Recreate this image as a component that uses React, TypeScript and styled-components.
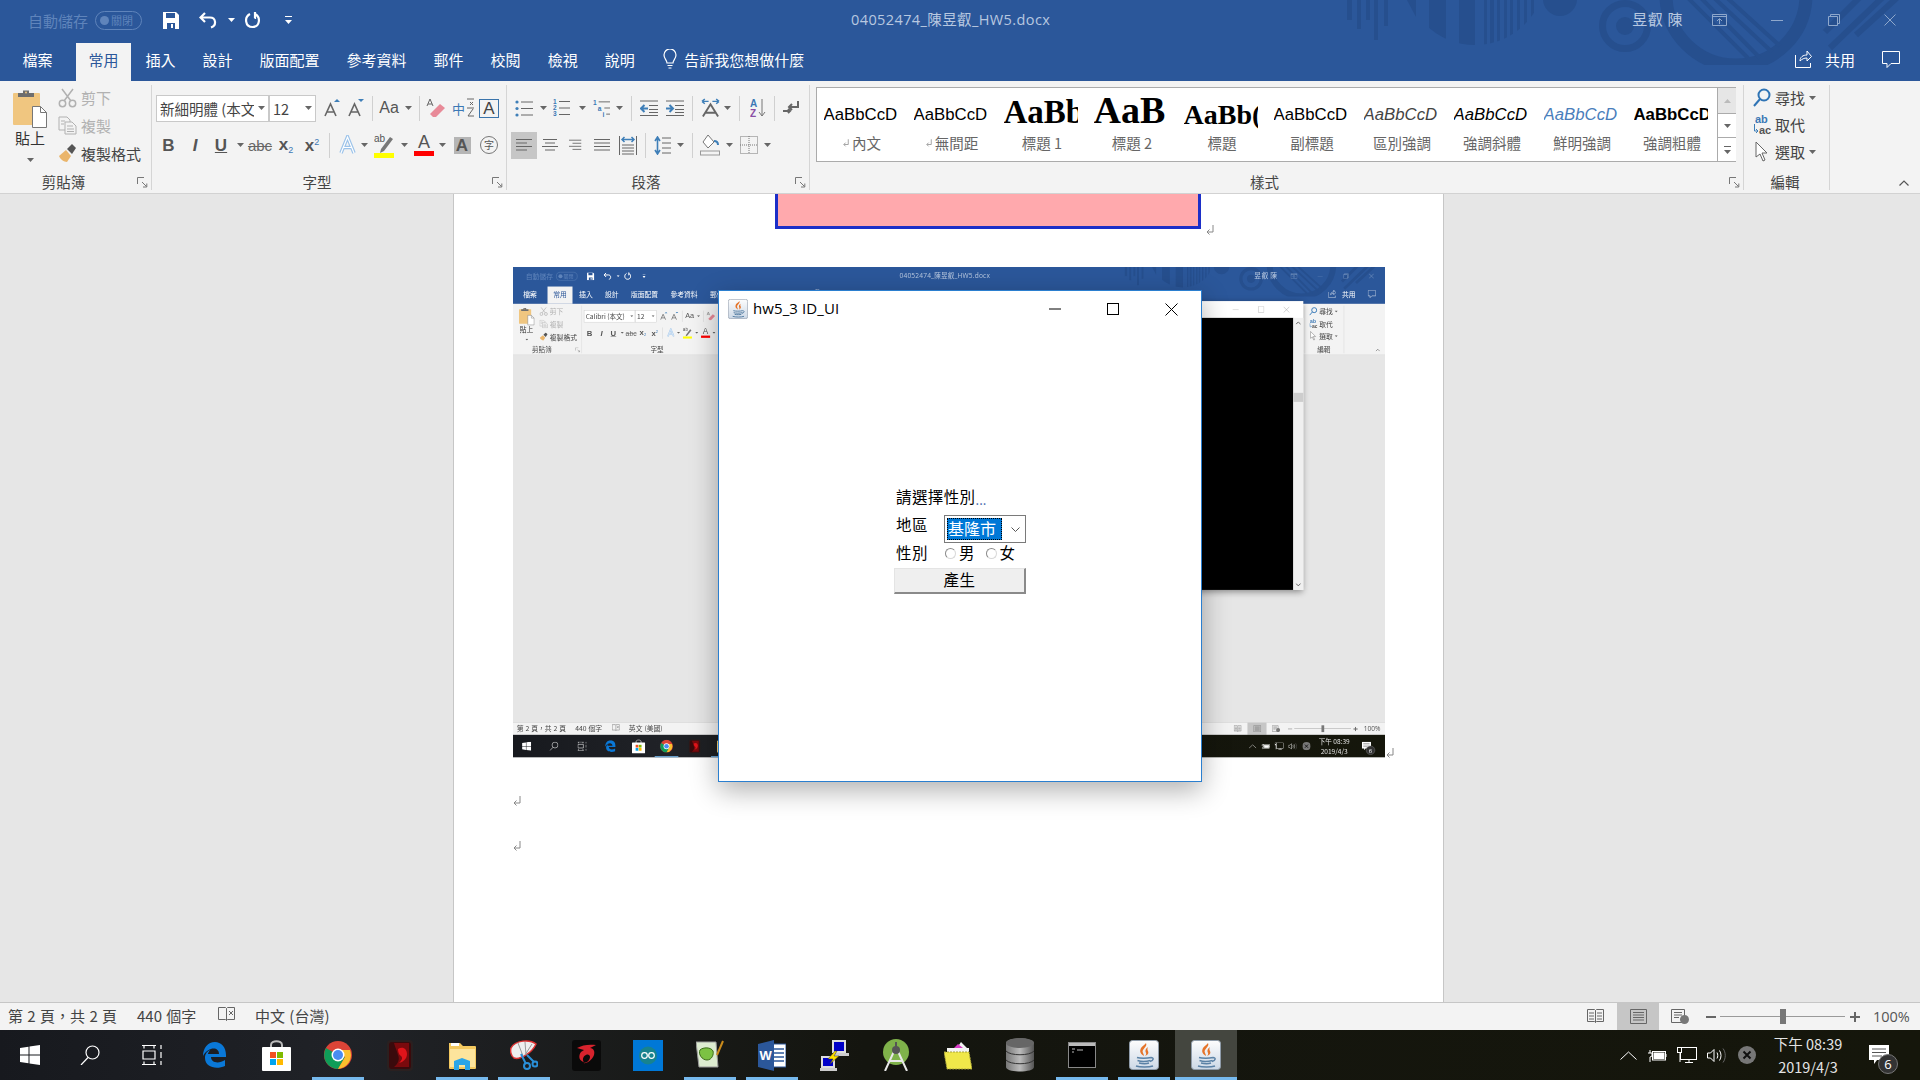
import React from "react";
import styled, { createGlobalStyle } from "styled-components";

const CJK = `"Noto Sans CJK TC", "Noto Sans", sans-serif`;

const Global = createGlobalStyle`
  html, body { margin: 0; padding: 0; width: 1920px; height: 1080px; overflow: hidden; background: #e6e6e6; }
  body { font-family: ${CJK}; }
`;

const Shell = styled.div`
  position: relative;
  width: 1920px;
  height: 1080px;
  display: flex;
  flex-direction: column;
  overflow: hidden;
  background: #e6e6e6;
`;

/* ---------- title bar + tabs ---------- */
const Header = styled.div`
  position: relative;
  height: 81px;
  flex: none;
  background: #2b579a;
`;
const Art = styled.svg`
  position: absolute;
  left: 0;
  top: 0;
`;
const TitleBar = styled.div`
  position: relative;
  height: 41px;
  display: flex;
  align-items: center;
  padding-bottom: 1px;
  box-sizing: border-box;
`;
const Qat = styled.div`
  width: 851px;
  flex: none;
  display: flex;
  align-items: center;
  padding-left: 28px;
  box-sizing: border-box;
`;
const AutoSave = styled.span`
  font-size: 15px;
  color: #5f84bb;
  width: 67px;
`;
const TogglePill = styled.span`
  width: 47px;
  height: 19px;
  box-sizing: border-box;
  border: 1px solid #5f84bb;
  border-radius: 10px;
  display: flex;
  align-items: center;
  gap: 2px;
  padding-left: 4px;
  font-size: 11px;
  line-height: 1;
  color: #5f84bb;
  margin-right: 21px;
  &::before {
    content: "";
    width: 9px;
    height: 9px;
    border-radius: 50%;
    background: #5f84bb;
  }
`;
const QatSlot = styled.span<{ $w: number }>`
  width: ${(p) => p.$w}px;
  flex: none;
  display: flex;
  align-items: center;
`;
const DocTitle = styled.div`
  font-size: 14.5px;
  color: #b8c8e0;
  white-space: nowrap;
  font-family: "Open Sans", ${CJK};
  letter-spacing: 0.4px;
  margin-bottom: 3px;
`;
const WinArea = styled.div`
  margin-left: auto;
  display: flex;
  align-items: center;
`;
const UserName = styled.span`
  font-size: 15px;
  letter-spacing: 0.6px;
  color: #b8c8e0;
  margin: 0 29px 3px 0;
`;
const WinBtn = styled.span<{ $w: number }>`
  width: ${(p) => p.$w}px;
  display: flex;
  align-items: center;
`;
const TabBar = styled.div`
  position: relative;
  height: 40px;
  display: flex;
  align-items: flex-end;
  padding-left: 10px;
  gap: 2px;
  color: #fff;
  font-size: 15px;
`;
const Tab = styled.div<{ $active?: boolean }>`
  height: 38px;
  padding: 0 12.5px 6px;
  display: flex;
  align-items: center;
  box-sizing: border-box;
  white-space: nowrap;
  background: ${(p) => (p.$active ? "#f3f3f3" : "transparent")};
  color: ${(p) => (p.$active ? "#2b579a" : "#fff")};
`;
const FileTab = styled(Tab)`
  margin-right: 9px;
`;
const TellMe = styled.div`
  height: 38px;
  display: flex;
  align-items: center;
  gap: 7px;
  padding: 0 0 6px 14px;
  box-sizing: border-box;
`;
const ShareArea = styled.div`
  margin-left: auto;
  height: 38px;
  display: flex;
  align-items: center;
  padding: 0 20px 6px 0;
  box-sizing: border-box;
`;
const ShareText = styled.span`
  margin: 0 27px 0 13px;
`;

/* ---------- ribbon ---------- */
const RibbonBar = styled.div`
  height: 113px;
  flex: none;
  display: flex;
  box-sizing: border-box;
  background: #f3f3f3;
  border-bottom: 1px solid #d2d2d2;
  color: #444;
  font-size: 15px;
`;
const Group = styled.div<{ $w: number }>`
  width: ${(p) => p.$w}px;
  flex: none;
  box-sizing: border-box;
  margin: 4px 0 3px;
  border-right: 1px solid #d5d5d5;
  display: flex;
  flex-direction: column;
`;
const GroupBody = styled.div`
  flex: 1;
  min-height: 0;
  display: flex;
`;
const GroupLabel = styled.div`
  height: 23px;
  box-sizing: border-box;
  padding: 7px 3px 0 0;
  display: flex;
  align-items: center;
  font-size: 14.5px;
  line-height: 1;
`;
const LabelText = styled.span<{ $full?: boolean }>`
  flex: 1;
  text-align: center;
  padding-right: ${(p) => (p.$full ? 0 : 10)}px;
`;
const Rows = styled.div`
  padding-top: 10px;
  display: flex;
  flex-direction: column;
  gap: 11px;
`;
const Row = styled.div`
  display: flex;
  align-items: center;
  height: 26px;
`;
const Tool = styled.span<{ $w: number; $ml?: number; $on?: boolean }>`
  width: ${(p) => p.$w}px;
  margin-left: ${(p) => p.$ml ?? 0}px;
  height: ${(p) => (p.$on ? 27 : 24)}px;
  flex: none;
  display: flex;
  align-items: center;
  justify-content: center;
  background: ${(p) => (p.$on ? "#c6c6c6" : "transparent")};
`;
const VSep = styled.span<{ $ml?: number }>`
  width: 1px;
  height: 25px;
  flex: none;
  margin-left: ${(p) => p.$ml ?? 3}px;
  background: #d0d0d0;
`;
const Combo = styled.div<{ $w: number; $ml: number }>`
  width: ${(p) => p.$w}px;
  margin-left: ${(p) => p.$ml}px;
  height: 27px;
  flex: none;
  box-sizing: border-box;
  background: #fff;
  border: 1px solid #c9c9c9;
  display: flex;
  align-items: center;
  padding-left: 3px;
  font-size: 14.5px;
  color: #444;
  overflow: hidden;
  white-space: nowrap;
`;
const ComboText = styled.span`
  flex: 1;
  overflow: hidden;
`;
const ComboArrow = styled.span`
  width: 14px;
  flex: none;
  display: flex;
  justify-content: center;
`;
const PasteCol = styled.div`
  width: 58px;
  flex: none;
  display: flex;
  flex-direction: column;
  align-items: center;
  padding: 4px 0 0 2px;
  box-sizing: border-box;
`;
const PasteLabel = styled.span`
  line-height: 18px;
  margin-top: -2px;
  font-size: 15px;
  color: #333;
`;
const PasteCaret = styled.span`
  margin-top: 11px;
  display: flex;
`;
const ClipCol = styled.div`
  display: flex;
  flex-direction: column;
  margin-top: -1px;
`;
const ClipItem = styled.div<{ $dim?: boolean }>`
  height: 28px;
  display: flex;
  align-items: center;
  gap: 4px;
  font-size: 15px;
  white-space: nowrap;
  color: ${(p) => (p.$dim ? "#b1b1b1" : "#444")};
  & > svg { width: 19px; flex: none; }
`;
const BoldLetter = styled.span<{ $italic?: boolean; $under?: boolean; $color?: string; $size?: number }>`
  font-family: "Liberation Sans", sans-serif;
  font-weight: 700;
  font-size: ${(p) => p.$size ?? 17}px;
  line-height: 1;
  color: ${(p) => p.$color ?? "#555"};
  font-style: ${(p) => (p.$italic ? "italic" : "normal")};
  text-decoration: ${(p) => (p.$under ? "underline" : "none")};
`;
const SubSup = styled.span<{ $sup?: boolean }>`
  font-size: 9px;
  color: #3b78b5;
  font-weight: 400;
  vertical-align: ${(p) => (p.$sup ? "6px" : "-3px")};
`;
const Strike = styled.span`
  font-family: "Liberation Sans", sans-serif;
  font-size: 15px;
  line-height: 1;
  color: #666;
  text-decoration: line-through;
`;
const RegularA = styled.span<{ $size?: number }>`
  font-family: "Liberation Sans", sans-serif;
  font-size: ${(p) => p.$size ?? 16}px;
  line-height: 1;
  color: #555;
`;
const ColorA = styled.span<{ $bar: string }>`
  font-family: "Liberation Sans", sans-serif;
  font-size: 18px;
  font-weight: 400;
  color: #555;
  line-height: 17px;
  width: 20px;
  text-align: center;
  border-bottom: 5px solid ${(p) => p.$bar};
`;
const GrayA = styled.span`
  width: 17px;
  height: 17px;
  background: #b5b5b5;
  font-family: "Liberation Sans", sans-serif;
  font-weight: 700;
  font-size: 17px;
  line-height: 17px;
  text-align: center;
  color: #555;
`;
const FramedA = styled.span`
  width: 20px;
  height: 19px;
  box-sizing: border-box;
  border: 1px solid #3a74ab;
  font-family: "Liberation Sans", sans-serif;
  font-size: 17px;
  line-height: 17px;
  text-align: center;
  color: #444;
`;
const CircleChar = styled.span`
  width: 18px;
  height: 18px;
  box-sizing: border-box;
  border: 1px solid #777;
  border-radius: 50%;
  font-size: 10px;
  line-height: 16px;
  text-align: center;
  color: #555;
`;

/* styles gallery */
const Gallery = styled.div`
  margin: 2px 0 0 6px;
  width: 920px;
  height: 75px;
  flex: none;
  display: flex;
  box-sizing: border-box;
  background: #fff;
  border: 1px solid #ababab;
`;
const StyleItem = styled.div`
  width: 90px;
  flex: none;
  display: flex;
  flex-direction: column;
  align-items: center;
`;
const Sample = styled.div<{ $font: string; $size: number; $weight?: number; $italic?: boolean; $color?: string }>`
  width: 74px;
  height: 46px;
  margin-left: -3px;
  display: flex;
  align-items: flex-end;
  justify-content: flex-start;
  overflow: hidden;
  white-space: nowrap;
  line-height: 1;
  padding-bottom: ${(p) => (p.$size < 20 ? 10 : 5)}px;
  box-sizing: border-box;
  font-family: ${(p) => p.$font};
  font-size: ${(p) => p.$size}px;
  font-weight: ${(p) => p.$weight ?? 400};
  font-style: ${(p) => (p.$italic ? "italic" : "normal")};
  color: ${(p) => p.$color ?? "#000"};
`;
const SampleLabel = styled.div`
  font-size: 14.5px;
  line-height: 20px;
  margin-top: -1px;
  color: #666;
  display: flex;
  align-items: center;
  gap: 3px;
`;
const GalleryScroll = styled.div`
  margin-left: auto;
  width: 18px;
  flex: none;
  display: flex;
  flex-direction: column;
  border-left: 1px solid #ababab;
`;
const ScrollBtn = styled.div<{ $off?: boolean; $h: number }>`
  height: ${(p) => p.$h}px;
  display: flex;
  align-items: center;
  justify-content: center;
  box-sizing: border-box;
  background: ${(p) => (p.$off ? "#e6e6e6" : "#fff")};
  border-bottom: 1px solid #ababab;
  &:last-child { border-bottom: 0; }
`;
const EditCol = styled.div`
  display: flex;
  flex-direction: column;
  margin-top: -1px;
  padding-left: 9px;
`;
const EditItem = styled.div`
  height: 27px;
  display: flex;
  align-items: center;
  font-size: 15px;
  white-space: nowrap;
  gap: 4px;
  & > svg:first-child { width: 18px; flex: none; }
`;
const CollapseCell = styled.div`
  flex: 1;
  display: flex;
  align-items: flex-end;
  justify-content: flex-end;
  padding: 0 11px 7px 0;
`;

/* ---------- document ---------- */
const DocArea = styled.div`
  position: relative;
  flex: 1;
  min-height: 0;
  background: #e6e6e6;
  overflow: hidden;
`;
const Page = styled.div`
  width: 991px;
  height: 100%;
  margin-left: 453px;
  box-sizing: border-box;
  background: #fff;
  border-left: 1px solid #c6c6c6;
  border-right: 1px solid #c6c6c6;
  padding-left: 59px;
`;
const PinkRow = styled.div`
  display: flex;
  align-items: flex-end;
  margin-left: 262px;
`;
const PinkBox = styled.div`
  width: 426px;
  height: 35px;
  box-sizing: border-box;
  background: #ffa9ad;
  border: 3px solid #1c2fc8;
  border-top: 0;
`;
const MiniRow = styled.div`
  margin-top: 38px;
  display: flex;
  align-items: flex-end;
`;
const MiniFrame = styled.div`
  width: 872px;
  height: 491px;
  flex: none;
  overflow: hidden;
  filter: blur(0.35px);
`;
const MiniScale = styled.div`
  width: 1920px;
  height: 1080px;
  transform: scale(0.4542);
  transform-origin: 0 0;
`;
const EmptyPara = styled.div`
  height: 45px;
  display: flex;
  align-items: center;
`;
const Paras = styled.div`
  margin-top: 20px;
`;
const ReturnMark = styled.svg<{ $ml?: number; $drop?: number }>`
  flex: none;
  margin: 0 0 ${(p) => -(p.$drop ?? 0)}px ${(p) => p.$ml ?? 3}px;
`;

/* console behind the dialog in the nested picture */
const ConsoleWin = styled.div`
  position: absolute;
  left: 900px;
  top: 75px;
  width: 840px;
  height: 636px;
  box-sizing: border-box;
  background: #fff;
  box-shadow: 0 4px 14px rgba(0, 0, 0, 0.4);
  display: flex;
  flex-direction: column;
`;
const ConsoleTitle = styled.div`
  height: 37px;
  flex: none;
  display: flex;
  align-items: center;
  justify-content: flex-end;
  gap: 42px;
  padding-right: 30px;
`;
const ConsoleBody = styled.div`
  flex: 1;
  display: flex;
  min-height: 0;
`;
const ConsoleScreen = styled.div`
  flex: 1;
  background: #000;
`;
const ConsoleScroll = styled.div`
  width: 22px;
  flex: none;
  background: #f0f0f0;
  display: flex;
  flex-direction: column;
  align-items: center;
  padding-top: 8px;
  box-sizing: border-box;
`;
const ConsoleThumb = styled.div`
  width: 100%;
  height: 20px;
  margin-top: 150px;
  background: #cdcdcd;
`;
const ConsoleDown = styled.div`
  margin-top: auto;
  padding-bottom: 8px;
  display: flex;
`;

/* ---------- java dialog ---------- */
const Dialog = styled.div`
  position: absolute;
  left: 718px;
  top: 96px;
  width: 484px;
  height: 492px;
  box-sizing: border-box;
  background: #fff;
  border: 1px solid #2b7fcf;
  box-shadow: 0 8px 26px rgba(0, 0, 0, 0.32);
  color: #000;
  display: flex;
  flex-direction: column;
`;
const DialogTitle = styled.div`
  height: 36px;
  flex: none;
  display: flex;
  align-items: center;
  padding-left: 9px;
`;
const DialogName = styled.span`
  font-family: "Open Sans", sans-serif;
  font-size: 15px;
  margin: 0 0 2px 5px;
  letter-spacing: 0.1px;
`;
const DialogControls = styled.div`
  margin-left: auto;
  display: flex;
  align-items: center;
  height: 100%;
`;
const CtrlBtn = styled.span`
  width: 58.5px;
  display: flex;
  justify-content: center;
`;
const DialogBody = styled.div`
  padding: 159px 0 0 177px;
  font-size: 15.5px;
  line-height: 1;
  font-weight: 400;
`;
const Prompt = styled.div`
  height: 22px;
  display: flex;
  align-items: center;
  margin-bottom: 7px;
  letter-spacing: 0.4px;
`;
const PromptDots = styled.span`
  color: #3a62a8;
  font-size: 13px;
  letter-spacing: 0;
  align-self: flex-end;
  margin-bottom: 2px;
`;
const FieldRow = styled.div<{ $h: number }>`
  height: ${(p) => p.$h}px;
  display: flex;
  align-items: flex-start;
`;
const FieldLabel = styled.span`
  width: 48px;
  height: 20px;
  flex: none;
  display: flex;
  align-items: center;
  letter-spacing: 0.4px;
`;
const SelectBox = styled.div`
  width: 82px;
  height: 28px;
  box-sizing: border-box;
  border: 1px solid #7a7a7a;
  background: #fff;
  display: flex;
  align-items: center;
  padding-left: 2px;
`;
const SelectValue = styled.span`
  width: 55px;
  height: 22px;
  box-sizing: border-box;
  background: #0078d7;
  outline: 1px dotted #000;
  outline-offset: -1px;
  color: #fff;
  font-size: 16px;
  display: flex;
  align-items: center;
  padding: 0 0 2px 1px;
`;
const SelectArrow = styled.span`
  margin-left: 9px;
  display: flex;
`;
const RadioRow = styled.div`
  display: flex;
  align-items: center;
  height: 20px;
  padding-left: 1px;
`;
const Radio = styled.span<{ $gap?: number }>`
  width: 11px;
  height: 11px;
  box-sizing: border-box;
  border-radius: 50%;
  border: 1px solid #d8d8d8;
  border-top-color: #8a8a8a;
  border-left-color: #8a8a8a;
  margin: 0 3px 0 ${(p) => p.$gap ?? 0}px;
`;
const CreateBtn = styled.div`
  width: 132px;
  height: 26px;
  margin-left: -2px;
  box-sizing: border-box;
  background: #efefef;
  border: 1px solid #e4e4e4;
  border-right: 2px solid #8a8a8a;
  border-bottom: 2px solid #8a8a8a;
  display: flex;
  align-items: center;
  justify-content: center;
  letter-spacing: 0.5px;
  padding-bottom: 1px;
`;

/* ---------- status bar ---------- */
const StatusBar = styled.div`
  height: 28px;
  flex: none;
  box-sizing: border-box;
  border-top: 1px solid #c6c6c6;
  background: #f3f3f3;
  display: flex;
  align-items: center;
  padding: 0 0 2px 8px;
  font-size: 15px;
  word-spacing: 1px;
  color: #444;
  white-space: nowrap;
`;
const StatusText = styled.span<{ $w: number }>`
  width: ${(p) => p.$w}px;
  flex: none;
`;
const StatusRight = styled.div`
  margin-left: auto;
  height: calc(100% + 2px);
  margin-bottom: -2px;
  display: flex;
  align-items: center;
`;
const ViewBtn = styled.span<{ $on?: boolean; $w: number }>`
  width: ${(p) => p.$w}px;
  height: 100%;
  display: flex;
  align-items: center;
  justify-content: center;
  background: ${(p) => (p.$on ? "#c6c6c6" : "transparent")};
`;
const ZoomOut = styled.span`
  width: 15px;
  display: flex;
  justify-content: flex-end;
`;
const ZoomTrack = styled.div`
  position: relative;
  width: 125px;
  height: 1px;
  margin: 0 4px;
  background: #9a9a9a;
  &::after {
    content: "";
    position: absolute;
    left: 60px;
    top: -7px;
    width: 6px;
    height: 15px;
    background: #777;
  }
`;
const ZoomPct = styled.span`
  width: 60px;
  padding-left: 13px;
  box-sizing: border-box;
  font-family: "Open Sans", sans-serif;
  font-size: 14.5px;
  color: #555;
`;

/* ---------- taskbar ---------- */
const Taskbar = styled.div`
  height: 50px;
  flex: none;
  display: flex;
  align-items: stretch;
  background: linear-gradient(90deg, #17191e 0%, #202227 18%, #14150f 45%, #15160b 100%);
`;
const TaskSlot = styled.div<{ $w: number; $run?: boolean; $active?: boolean }>`
  position: relative;
  width: ${(p) => p.$w}px;
  flex: none;
  display: flex;
  align-items: center;
  justify-content: center;
  background: ${(p) => (p.$active ? "#44463f" : "transparent")};
  &::after {
    content: "";
    display: ${(p) => (p.$run ? "block" : "none")};
    position: absolute;
    left: ${(p) => (p.$active ? 0 : 5)}px;
    right: ${(p) => (p.$active ? 0 : 5)}px;
    bottom: 0;
    height: 3px;
    background: #76b9ed;
  }
`;
const Tray = styled.div`
  margin-left: auto;
  display: flex;
  align-items: center;
  color: #fff;
`;
const TrayIcon = styled.span<{ $w: number }>`
  width: ${(p) => p.$w}px;
  flex: none;
  display: flex;
  justify-content: center;
`;
const Clock = styled.div`
  width: 94px;
  flex: none;
  font-size: 14.5px;
  line-height: 23px;
  text-align: center;
  color: #e4e4e4;
  padding-bottom: 1px;
`;
const NotifyBox = styled.div`
  position: relative;
  width: 65px;
  height: 50px;
  flex: none;
  display: flex;
  align-items: flex-start;
  padding: 15px 0 0 14px;
  box-sizing: border-box;
`;
const NotifyBadge = styled.span`
  position: absolute;
  left: 23px;
  top: 24px;
  width: 20px;
  height: 20px;
  border-radius: 50%;
  background: #333;
  border: 1px solid #777;
  box-sizing: border-box;
  color: #fff;
  font-family: "Open Sans", sans-serif;
  font-size: 13px;
  line-height: 18px;
  text-align: center;
`;

/* ---------- icons ---------- */
const Caret = ({ c = "#666" }: { c?: string }) => (
  <svg width="7" height="4" viewBox="0 0 7 4"><path d="M0 0h7L3.5 4z" fill={c} /></svg>
);
const CaretCell = ({ ml = 0, w = 8 }: { ml?: number; w?: number }) => (
  <Tool $w={w} $ml={ml}><Caret /></Tool>
);
const Launcher = () => (
  <svg width="11" height="11" viewBox="0 0 11 11" fill="none" stroke="#777">
    <path d="M.5 7V.5H7M5 5l4.5 4.5M6 10h3.8V6.500" />
  </svg>
);
const ReturnIcon = ({ w = 8, h = 10, ml, drop }: { w?: number; h?: number; ml?: number; drop?: number }) => (
  <ReturnMark width={w} height={h} viewBox="0 0 8 10" fill="none" stroke="#888" $ml={ml} $drop={drop}>
    <path d="M7 0v7H1.500M3.500 4.500 1 7l2.500 2.500" />
  </ReturnMark>
);
const Lines = ({ kind }: { kind: "left" | "center" | "right" | "just" }) => {
  const rows: [number, number][] =
    kind === "left" ? [[0, 16], [0, 11], [0, 16], [0, 11]]
    : kind === "center" ? [[1, 15], [3, 13], [0, 16], [3, 13]]
    : kind === "right" ? [[0, 14], [4, 14], [0, 14], [4, 14]]
    : [[0, 16], [0, 16], [0, 16], [0, 16]];
  return (
    <svg width="16" height="14" viewBox="0 0 16 14" stroke="#666">
      {rows.map(([a, b], i) => <path key={i} d={`M${a} ${1.5 + i * 3.500}H${b}`} />)}
    </svg>
  );
};
const Clipboard = () => (
  <svg width="35" height="42" viewBox="0 0 35 42">
    <rect x="0" y="4" width="27" height="32" rx="1" fill="#f0c680" />
    <path d="M5 8V4h5V1.500h6V4h5v4z" fill="#6e6e6e" />
    <circle cx="13" cy="3.500" r="1" fill="#f0c680" />
    <path d="M19.500 17.500h8l6 6v15h-14z" fill="#fff" stroke="#777" />
    <path d="M27.500 17.500v6h6" fill="none" stroke="#777" />
  </svg>
);
const Scissors = () => (
  <svg width="19" height="20" viewBox="0 0 19 20" fill="none" stroke="#b1b1b1" strokeWidth="1.500">
    <circle cx="4.500" cy="15.500" r="3.200" /><circle cx="14.500" cy="15.500" r="3.200" />
    <path d="M6 13 15 1M13 13 4 1" />
  </svg>
);
const CopyIcon = () => (
  <svg width="19" height="19" viewBox="0 0 19 19" fill="#f3f3f3" stroke="#b1b1b1">
    <path d="M1 1h8l3 3v10H1z" /><path d="M7 6h7l4 4v8H7z" /><path d="M9 10h6M9 13h7M9 15.500h7M3 5h4M3 8h3" />
  </svg>
);
const Brush = () => (
  <svg width="19" height="19" viewBox="0 0 19 19">
    <path d="M1 12 8 6l5 6-4 6c-3 0-7-3-8-6z" fill="#eab56b" />
    <path d="m9 5 5-5 4 4-4 6z" fill="#555" />
  </svg>
);
const GrowA = ({ up }: { up?: boolean }) => (
  <svg width="17" height="20" viewBox="0 0 17 20">
    <path d="M1 18 6.500 6 12 18M3 14h7" fill="none" stroke="#666" strokeWidth="1.600" />
    <path d={up ? "M10 4l3-3 3 3z" : "M10 1h6l-3 3z"} fill="#3f7fb8" />
  </svg>
);
const Eraser = () => (
  <svg width="20" height="20" viewBox="0 0 20 20">
    <path d="M1 8 4 1l3 7M2 6h4" fill="none" stroke="#666" />
    <path d="M4 16 14 6l5 4-9 9H7z" fill="#e88a98" />
  </svg>
);
const Phonetic = () => (
  <svg width="24" height="22" viewBox="0 0 24 22">
    <text x="0" y="17" fontSize="13" fontFamily={CJK} fill="#3b78b5">中</text>
    <path d="M15 2h7M18 5l3 3M21 5l-3 3M15 11h7M16 19h6M21 12l-5 7" fill="none" stroke="#666" />
  </svg>
);
const GlowA = () => (
  <svg width="17" height="20" viewBox="0 0 17 20">
    <path d="M2 18 8.500 2 15 18M4.500 12.500h8" fill="none" stroke="#9cc3ea" strokeWidth="3.500" />
    <path d="M2 18 8.500 2 15 18M4.500 12.500h8" fill="none" stroke="#fff" strokeWidth="1.200" />
  </svg>
);
const Highlight = () => (
  <svg width="20" height="25" viewBox="0 0 20 25">
    <text x="0" y="9" fontSize="10" fontFamily="Liberation Sans" fill="#555">ab</text>
    <path d="M7 16 16 4l3 2-9 12-4 2z" fill="#777" />
    <rect x="0" y="20" width="20" height="5" fill="#ff0" />
  </svg>
);
const Bullets = () => (
  <svg width="18" height="17" viewBox="0 0 18 17" stroke="#666">
    <circle cx="2" cy="2" r="1.600" fill="#3f7fb8" stroke="none" /><circle cx="2" cy="8.500" r="1.600" fill="#3f7fb8" stroke="none" /><circle cx="2" cy="15" r="1.600" fill="#3f7fb8" stroke="none" />
    <path d="M6 2h12M6 8.500h12M6 15h12" />
  </svg>
);
const Numbered = () => (
  <svg width="17" height="18" viewBox="0 0 17 18">
    <g fontSize="6.500" fontFamily="Liberation Sans" fill="#3b78b5" fontWeight="700"><text x="0" y="5">1</text><text x="0" y="11">2</text><text x="0" y="17">3</text></g>
    <path d="M6 2.500h11M6 9h11M6 15.500h11" stroke="#666" />
  </svg>
);
const Multi = () => (
  <svg width="18" height="18" viewBox="0 0 18 18">
    <g fontSize="7" fontFamily="Liberation Sans" fill="#3b78b5" fontWeight="700"><text x="0" y="6">1</text><text x="5" y="12">a</text><text x="10" y="18">i</text></g>
    <path d="M6 2.500h12M12 9h6M14 15.500h4" stroke="#666" />
  </svg>
);
const Indent = ({ out }: { out?: boolean }) => (
  <svg width="18" height="17" viewBox="0 0 18 17">
    <path d="M0 1h18M9 5.500h9M9 9.500h9M0 15.500h18M9 12.500h9" stroke="#666" fill="none" />
    <path d={out ? "M8 8.500H2M4.500 5 1 8.500 4.500 12" : "M0 8.500h6M3.500 5 7 8.500 3.500 12"} stroke="#3f7fb8" strokeWidth="2" fill="none" />
  </svg>
);
const TextDir = () => (
  <svg width="20" height="20" viewBox="0 0 20 20">
    <path d="M2 19 10 6l8 13M5 15h10" stroke="#666" strokeWidth="2" fill="none" />
    <path d="M1 3h7M1 3l3-2.500M1 3l3 2.500M19 3h-7M19 3l-3-2.500M19 3l-3 2.500" stroke="#3f7fb8" strokeWidth="1.500" fill="none" />
  </svg>
);
const Sort = () => (
  <svg width="16" height="20" viewBox="0 0 16 20">
    <text x="0" y="9" fontSize="10" fontWeight="700" fontFamily="Liberation Sans" fill="#3b78b5">A</text>
    <text x="0" y="19" fontSize="10" fontWeight="700" fontFamily="Liberation Sans" fill="#8a4ea5">Z</text>
    <path d="M12 1v17M9 14l3 4 3-4" stroke="#777" fill="none" />
  </svg>
);
const ShowMarks = () => (
  <svg width="16" height="14" viewBox="0 0 16 14" fill="none" stroke="#666" strokeWidth="2">
    <path d="M15 0v6H7M9 3 6 6l3 3M0 10h7M5 8l2 2-2 2" />
  </svg>
);
const Distribute = () => (
  <svg width="18" height="19" viewBox="0 0 18 19" fill="none">
    <path d="M.500 0v19M17.500 0v19M3 9h12M3 12h12M3 15h12M3 18h12" stroke="#666" />
    <path d="M3 3.500h12M5.500 1 3 3.500 5.500 6M12.500 1 15 3.500 12.500 6" stroke="#3f7fb8" strokeWidth="1.500" />
  </svg>
);
const LineSpace = () => (
  <svg width="17" height="19" viewBox="0 0 17 19" fill="none">
    <path d="M8 2h9M8 7h9M8 12h9M8 17h9" stroke="#666" />
    <path d="M3.500 1v17M1 5l2.500-4L6 5M1 14l2.500 4L6 14" stroke="#3f7fb8" strokeWidth="1.600" />
  </svg>
);
const Bucket = () => (
  <svg width="20" height="22" viewBox="0 0 20 22" fill="none">
    <path d="M8 1 3 8l5 6 6-6z" fill="#fff" stroke="#777" />
    <path d="M14 7c3 0 4 2 4 4" stroke="#3f7fb8" strokeWidth="2" />
    <rect x=".5" y="17" width="19" height="4" stroke="#999" />
  </svg>
);
const Borders = () => (
  <svg width="18" height="18" viewBox="0 0 18 18" fill="none" stroke="#777" strokeDasharray="1 1">
    <rect x=".5" y=".5" width="17" height="17" /><path d="M9 0v18M0 9h18" />
  </svg>
);
const Binocular = () => (
  <svg width="18" height="20" viewBox="0 0 18 20" fill="none" stroke="#2f74b5" strokeWidth="2">
    <circle cx="11" cy="7" r="5.500" /><path d="M7 11 1 18" />
  </svg>
);
const Replace = () => (
  <svg width="18" height="22" viewBox="0 0 18 22">
    <text x="2" y="9" fontSize="11" fontWeight="700" fontFamily="Liberation Sans" fill="#3b78b5">ab</text>
    <text x="6" y="20" fontSize="11" fontWeight="700" fontFamily="Liberation Sans" fill="#555">ac</text>
    <path d="M1.500 10v7h3M3 15l2 2-2 2" stroke="#3f7fb8" fill="none" />
  </svg>
);
const Pointer = () => (
  <svg width="16" height="21" viewBox="0 0 16 21">
    <path d="M2 1v15l4-3 3 7 2-1-3-7h5z" fill="#fff" stroke="#666" />
  </svg>
);
const JavaTile = ({ size }: { size: number }) => (
  <svg width={size} height={size} viewBox="0 0 30 30">
    <defs>
      <linearGradient id="javaTile" x1="0" y1="0" x2="0" y2="1">
        <stop offset="0" stopColor="#fdfdfd" /><stop offset="1" stopColor="#ccd8e6" />
      </linearGradient>
    </defs>
    <rect x=".5" y=".5" width="29" height="29" rx="3" fill="url(#javaTile)" stroke="#8f9caa" />
    <path d="M17 3c2 4-5 6-3 10 .500 1 1 2 1 3-3-2-5-4-3-8 1-2 4-3 5-5z" fill="#e5742a" />
    <path d="M19 7c-3 2-3 4-2 6 .500 1 0 2-1 3 3-1 4-3 3-5-.500-1-1-2 0-4z" fill="#e5742a" />
    <path d="M8 17.500c3 1 10 1 14 0M8.500 20.500c3 1 9 1 13 0M10 23c3 .700 8 .700 10 0M7 26c4 1.400 13 1.400 17 0M22 17.500c3 0 3 3-1 4" fill="none" stroke="#5b82a6" strokeWidth="1.500" />
  </svg>
);

const IconWin = () => (
  <svg width="20" height="20" viewBox="0 0 20 20" fill="#fff">
    <path d="M0 3l8.500-1.300v7.800H0zM9.500 1.500 20 0v9.500H9.500zM0 10.500h8.500v7.800L0 17zM9.500 10.500H20V20L9.500 18.500z" />
  </svg>
);
const IconSearch = () => (
  <svg width="20" height="20" viewBox="0 0 20 20" fill="none" stroke="#fff" strokeWidth="1.200">
    <circle cx="12.500" cy="7.500" r="6.500" /><path d="M8 12.500 1 20" />
  </svg>
);
const IconTaskView = () => (
  <svg width="20" height="20" viewBox="0 0 20 20" fill="none" stroke="#fff" strokeWidth="1.200">
    <path d="M0 .5h14M0 19.500h14M1 6h12v8H1zM19 0v4M19 7v6M19 16v4M2 .5v3M12 .5v3M2 16.500v3M12 16.500v3" />
  </svg>
);
const IconEdge = () => (
  <svg width="24" height="26" viewBox="0 0 24 26">
    <path d="M1 14C1 6 6 0 13 0c6 0 11 5 11 13v2H9c0 6 8 7 14 3v6c-9 4-20 1-20-8 0-3 1-6 5-8 0 0-2 3-2 4h11c0-7-10-8-16 2z" fill="#0a78d7" />
  </svg>
);
const IconStore = () => (
  <svg width="29" height="31" viewBox="0 0 29 31">
    <path d="M9 8V5c0-5 11-5 11 0v3" fill="none" stroke="#bbb" strokeWidth="2" />
    <rect x="0" y="7" width="29" height="24" rx="1" fill="#fff" />
    <rect x="8" y="12" width="6" height="6" fill="#f25022" /><rect x="15" y="12" width="6" height="6" fill="#7fba00" />
    <rect x="8" y="19" width="6" height="6" fill="#00a4ef" /><rect x="15" y="19" width="6" height="6" fill="#ffb900" />
  </svg>
);
const IconChrome = () => (
  <svg width="28" height="28" viewBox="0 0 28 28">
    <circle cx="14" cy="14" r="14" fill="#db4437" />
    <path d="M14 14 2 7A14 14 0 0 0 14 28l7-12z" fill="#0f9d58" />
    <path d="M14 9h12a14 14 0 0 1-12 19l7-12z" fill="#fbc02d" />
    <circle cx="14" cy="14" r="6.500" fill="#fff" /><circle cx="14" cy="14" r="5" fill="#4a8cf0" />
  </svg>
);
const IconRed = () => (
  <svg width="26" height="31" viewBox="0 0 26 31">
    <rect width="26" height="31" rx="4" fill="#2a2020" />
    <rect x="2" y="2" width="22" height="27" rx="3" fill="#3a0a0c" />
    <path d="M7 3h15v24H7c4-3 6-8 4-12C10 11 8 7 7 3z" fill="#7a0a0d" />
    <path d="M11 9c5-3 9 0 9 5s-4 8-8 9c3-3 4-5 2-7-2-1-3-4-3-7z" fill="#e0141a" />
  </svg>
);
const IconFolder = () => (
  <svg width="27" height="29" viewBox="0 0 27 29">
    <path d="M0 2h11l3 3h12a1 1 0 0 1 1 1v21a1 1 0 0 1-1 1H1a1 1 0 0 1-1-1z" fill="#f4c95f" />
    <rect x="1" y="8" width="25" height="18" fill="#fde49c" />
    <rect x="2" y="2" width="8" height="3" fill="#fff" />
    <path d="M5 29v-9l8-3 8 3v9h-5v-5h-6v5z" fill="#2aa5e8" />
  </svg>
);
const IconSnip = () => (
  <svg width="28" height="31" viewBox="0 0 28 31" fill="none">
    <path d="M1 8C5 0 20-1 26 4 22 13 10 20 4 18 1 16 0 11 1 8z" fill="#eee" stroke="#d33" strokeWidth="1.500" />
    <path d="M8 3 13 16M15 2l1 13M22 4l-7 11" stroke="#999" />
    <circle cx="17" cy="26" r="3" stroke="#2a8fd8" strokeWidth="2" /><circle cx="25" cy="24" r="2.500" stroke="#2a8fd8" strokeWidth="2" />
    <path d="M11 14 16 24M17 15l7 7" stroke="#2a8fd8" strokeWidth="2" />
  </svg>
);
const IconGarena = () => (
  <svg width="29" height="31" viewBox="0 0 29 31">
    <rect width="29" height="31" rx="3" fill="#0a0a0a" />
    <path d="M5 8c5-3 12-4 19-3l-6 3c4 0 5 4 4 7-2 5-7 9-11 8 4 0 7-3 7-6 0-2-2-3-4-2-3 1-4 5-2 7-5-1-6-6-3-10l3-2z" fill="#d7232d" />
  </svg>
);
const IconArduino = () => (
  <svg width="30" height="31" viewBox="0 0 30 31">
    <rect width="30" height="31" fill="#0078d7" />
    <circle cx="15" cy="15.500" r="9" fill="#17838f" />
    <circle cx="11.500" cy="15.500" r="2.800" fill="none" stroke="#fff" strokeWidth="1.200" /><circle cx="18.500" cy="15.500" r="2.800" fill="none" stroke="#fff" strokeWidth="1.200" />
  </svg>
);
const IconNotepad = () => (
  <svg width="28" height="31" viewBox="0 0 28 31">
    <path d="M0 2h20l2 25H3z" fill="#ddecd0" stroke="#999" />
    <path d="M4 10c3-3 11-3 13 1 1 3-1 9-6 9s-9-6-7-10z" fill="#7cc243" stroke="#3d6b1a" />
    <path d="M21 15 27 1" stroke="#c98a1b" strokeWidth="2" />
  </svg>
);
const IconWord = () => (
  <svg width="28" height="31" viewBox="0 0 28 31">
    <rect x="12" y="4" width="16" height="23" fill="#fff" stroke="#2b579a" />
    <path d="M16 9h10M16 13h10M16 17h10M16 21h10" stroke="#2b579a" strokeWidth="1.500" />
    <path d="M0 4 16 0v31L0 27z" fill="#2b579a" />
    <text x="1.500" y="20" fontSize="13" fontWeight="700" fontFamily="Liberation Sans" fill="#fff">W</text>
  </svg>
);
const IconPutty = () => (
  <svg width="30" height="32" viewBox="0 0 30 32">
    <rect x="13" y="1" width="14" height="13" fill="#ddd" /><rect x="15" y="3" width="10" height="9" fill="#0000c8" />
    <rect x="15" y="14" width="15" height="3" fill="#ccc" />
    <rect x="2" y="17" width="14" height="12" fill="#ddd" /><rect x="4" y="19" width="10" height="8" fill="#0000c8" />
    <rect x="1" y="29" width="17" height="3" fill="#ccc" />
    <path d="M16 12 9 20h5l-3 5 9-8h-5l3-5z" fill="#ffe000" stroke="#333" strokeWidth=".5" />
  </svg>
);
const IconAndroid = () => (
  <svg width="26" height="32" viewBox="0 0 26 32" fill="none">
    <circle cx="13" cy="13" r="13" fill="#7fb24a" />
    <path d="M2 32 13 8l11 24M6 22h14" stroke="#e8e8e8" strokeWidth="2" />
    <circle cx="13" cy="11" r="4" fill="#555" />
    <path d="M13 3v5" stroke="#555" strokeWidth="2" />
  </svg>
);
const IconMeshFolder = () => (
  <svg width="28" height="29" viewBox="0 0 28 29">
    <path d="M3 7h10l4-6 6 6h2v8H3z" fill="#f4f4f4" />
    <path d="M10 7l4-4 5 4z" fill="#d93bc7" />
    <path d="M0 11h25l3 17H3z" fill="#f0e84a" stroke="#a9a43a" strokeDasharray="2 1" />
  </svg>
);
const IconDb = () => (
  <svg width="28" height="34" viewBox="0 0 28 34">
    <defs>
      <linearGradient id="dbg" x1="0" x2="1" y1="0" y2="0"><stop offset="0" stopColor="#777" /><stop offset=".5" stopColor="#bbb" /><stop offset="1" stopColor="#555" /></linearGradient>
    </defs>
    <path d="M0 5c0-6 28-6 28 0v24c0 6-28 6-28 0z" fill="url(#dbg)" />
    <ellipse cx="14" cy="5" rx="14" ry="5" fill="#666" />
    <path d="M0 13c4 5 24 5 28 0M0 22c4 5 24 5 28 0" stroke="#333" fill="none" />
  </svg>
);
const IconCmd = () => (
  <svg width="28" height="26" viewBox="0 0 28 26">
    <rect x=".5" y=".5" width="27" height="25" fill="#000" stroke="#888" />
    <rect x="1" y="1" width="26" height="3" fill="#bbb" />
    <path d="M4 7h3M4 10h2M9 8h6" stroke="#bbb" />
  </svg>
);
const Chevron = () => (
  <svg width="17" height="9" viewBox="0 0 17 9" fill="none" stroke="#fff"><path d="M.5 8.500 8.500 1l8 7.500" /></svg>
);
const Battery = () => (
  <svg width="20" height="13" viewBox="0 0 20 13" fill="none" stroke="#fff">
    <path d="M3 1v3M1 4h4v3L3 8v5" /><rect x="5.500" y="2.500" width="13" height="8.500" /><rect x="7" y="4" width="10" height="5.500" fill="#fff" /><path d="M19 5v3" />
  </svg>
);
const Network = () => (
  <svg width="20" height="17" viewBox="0 0 20 17" fill="none" stroke="#fff">
    <rect x="3.500" y=".5" width="16" height="12" /><rect x=".5" y=".5" width="4" height="5" fill="#15160b" /><path d="M3 6v9M12 12.500V15M8 15.500h8" />
  </svg>
);
const Speaker = () => (
  <svg width="20" height="15" viewBox="0 0 20 15" fill="none" stroke="#fff">
    <path d="M.5 5h3L7 1.500v12L3.500 10h-3z" /><path d="M10 4.500c1 2 1 4 0 6M12.500 2.500c2 3 2 7 0 10" /><path d="M16 .5c3 4 3 10 0 14" stroke="#666" />
  </svg>
);
const XCircle = () => (
  <svg width="18" height="18" viewBox="0 0 18 18">
    <circle cx="9" cy="9" r="9" fill="#777" /><path d="m5.500 5.500 7 7m0-7-7 7" stroke="#111" strokeWidth="2" />
  </svg>
);

const tasks: { key: string; w: number; icon: React.ReactNode; run?: boolean; active?: boolean }[] = [
  { key: "win", w: 60, icon: <IconWin /> },
  { key: "search", w: 60, icon: <IconSearch /> },
  { key: "view", w: 63, icon: <IconTaskView /> },
  { key: "edge", w: 62, icon: <IconEdge /> },
  { key: "store", w: 62, icon: <IconStore /> },
  { key: "chrome", w: 62, run: true, icon: <IconChrome /> },
  { key: "red", w: 62, icon: <IconRed /> },
  { key: "folder", w: 62, run: true, icon: <IconFolder /> },
  { key: "snip", w: 62, run: true, icon: <IconSnip /> },
  { key: "garena", w: 62, icon: <IconGarena /> },
  { key: "arduino", w: 62, icon: <IconArduino /> },
  { key: "npp", w: 62, run: true, icon: <IconNotepad /> },
  { key: "word", w: 62, run: true, icon: <IconWord /> },
  { key: "putty", w: 62, icon: <IconPutty /> },
  { key: "android", w: 62, icon: <IconAndroid /> },
  { key: "mesh", w: 62, icon: <IconMeshFolder /> },
  { key: "db", w: 62, icon: <IconDb /> },
  { key: "cmd", w: 62, run: true, icon: <IconCmd /> },
  { key: "java", w: 62, run: true, icon: <JavaTile size={30} /> },
  { key: "java2", w: 62, run: true, active: true, icon: <JavaTile size={30} /> },
];

const tabs = ["插入", "設計", "版面配置", "參考資料", "郵件", "校閱", "檢視", "說明"];

const sans = `"Liberation Sans", sans-serif`;
const serif = `"Liberation Serif", serif`;
const gallery = [
  { label: "內文", mark: true, font: sans, size: 16.8 },
  { label: "無間距", mark: true, font: sans, size: 16.8 },
  { label: "標題 1", font: serif, size: 33, weight: 700 },
  { label: "標題 2", font: serif, size: 38, weight: 700 },
  { label: "標題", font: serif, size: 28, weight: 700, text: "AaBb(" },
  { label: "副標題", font: sans, size: 16.8 },
  { label: "區別強調", font: sans, size: 16.8, italic: true, color: "#444" },
  { label: "強調斜體", font: sans, size: 16.8, italic: true },
  { label: "鮮明強調", font: sans, size: 16.8, italic: true, color: "#4a7ebb" },
  { label: "強調粗體", font: sans, size: 16.8, weight: 700 },
];

const TitleArt = () => (
  <Art width="1920" height="81" viewBox="0 0 1920 81">
    <defs>
      <clipPath id="halfDisc"><circle cx="1475" cy="-25" r="70" /></clipPath>
      <clipPath id="bigRing"><rect x="1600" y="0" width="320" height="65" /></clipPath>
    </defs>
    <g fill="#264f8e">
      <rect x="1347" y="0" width="5" height="20" /><rect x="1357" y="0" width="4" height="29" />
      <rect x="1366" y="0" width="4" height="20" /><rect x="1374" y="0" width="4" height="40" />
      <rect x="1384" y="0" width="4" height="26" />
      <path d="M1407 0h9v17z" />
      <g clipPath="url(#halfDisc)">
        <rect x="1429" y="0" width="17" height="50" /><rect x="1459" y="0" width="16" height="50" />
        <rect x="1484" y="0" width="3" height="50" /><rect x="1490" y="0" width="4" height="50" />
        <rect x="1497" y="0" width="3" height="50" /><rect x="1504" y="0" width="3" height="50" />
        <rect x="1517" y="0" width="3" height="50" /><rect x="1524" y="0" width="3" height="50" />
        <rect x="1531" y="0" width="3" height="50" /><rect x="1510" y="0" width="3" height="50" />
      </g>
      <circle cx="1560" cy="-1" r="17" />
      <circle cx="1625" cy="26" r="9" />
    </g>
    <g fill="none" stroke="#264f8e">
      <circle cx="1625" cy="26" r="22.500" strokeWidth="7" />
      <g clipPath="url(#bigRing)">
        <circle cx="1736" cy="-5" r="70" strokeWidth="13" />
        <path d="M1685-5 1748 58M1698-5 1760 58M1711-5 1772 52M1724-5 1780 46" strokeWidth="4" />
      </g>
      <path d="M1825 32 1862-5M1830 48 1885-5M1856 35 1900-5" strokeWidth="6" />
    </g>
  </Art>
);

const Ribbon = ({ fontName }: { fontName: string }) => (
  <RibbonBar>
    <Group $w={152}>
      <GroupBody>
        <PasteCol>
          <Clipboard />
          <PasteLabel>貼上</PasteLabel>
          <PasteCaret><Caret /></PasteCaret>
        </PasteCol>
        <ClipCol>
          <ClipItem $dim><Scissors />剪下</ClipItem>
          <ClipItem $dim><CopyIcon />複製</ClipItem>
          <ClipItem><Brush />複製格式</ClipItem>
        </ClipCol>
      </GroupBody>
      <GroupLabel><LabelText>剪貼簿</LabelText><Launcher /></GroupLabel>
    </Group>
    <Group $w={355}>
      <GroupBody>
        <Rows>
          <Row>
            <Combo $w={113} $ml={4}><ComboText>{fontName}</ComboText><ComboArrow><Caret /></ComboArrow></Combo>
            <Combo $w={47} $ml={0}><ComboText>12</ComboText><ComboArrow><Caret /></ComboArrow></Combo>
            <Tool $w={24} $ml={4}><GrowA up /></Tool>
            <Tool $w={25}><GrowA /></Tool>
            <VSep />
            <Tool $w={28} $ml={2}><RegularA>Aa</RegularA></Tool>
            <CaretCell ml={1} />
            <VSep $ml={7} />
            <Tool $w={32}><Eraser /></Tool>
            <Tool $w={24}><Phonetic /></Tool>
            <Tool $w={22} $ml={2}><FramedA>A</FramedA></Tool>
          </Row>
          <Row>
            <Tool $w={25} $ml={4}><BoldLetter>B</BoldLetter></Tool>
            <Tool $w={24} $ml={2}><BoldLetter $italic>I</BoldLetter></Tool>
            <Tool $w={24} $ml={2}><BoldLetter $under>U</BoldLetter></Tool>
            <CaretCell ml={3} />
            <Tool $w={30} $ml={1}><Strike>abc</Strike></Tool>
            <Tool $w={18} $ml={2}><BoldLetter>x<SubSup>2</SubSup></BoldLetter></Tool>
            <Tool $w={24} $ml={5}><BoldLetter>x<SubSup $sup>2</SubSup></BoldLetter></Tool>
            <VSep $ml={5} />
            <Tool $w={26} $ml={4}><GlowA /></Tool>
            <CaretCell />
            <Tool $w={32}><Highlight /></Tool>
            <CaretCell />
            <Tool $w={26} $ml={3}><ColorA $bar="#f00">A</ColorA></Tool>
            <CaretCell w={10} />
            <Tool $w={30}><GrayA>A</GrayA></Tool>
            <Tool $w={24}><CircleChar>字</CircleChar></Tool>
          </Row>
        </Rows>
      </GroupBody>
      <GroupLabel><LabelText>字型</LabelText><Launcher /></GroupLabel>
    </Group>
    <Group $w={303}>
      <GroupBody>
        <Rows>
          <Row>
            <Tool $w={18} $ml={8}><Bullets /></Tool>
            <CaretCell ml={6} />
            <Tool $w={17} $ml={6}><Numbered /></Tool>
            <CaretCell ml={8} />
            <Tool $w={17} $ml={7}><Multi /></Tool>
            <CaretCell ml={5} />
            <VSep $ml={8} />
            <Tool $w={18} $ml={8}><Indent out /></Tool>
            <Tool $w={18} $ml={8}><Indent /></Tool>
            <VSep $ml={8} />
            <Tool $w={19} $ml={8}><TextDir /></Tool>
            <CaretCell ml={3} />
            <VSep $ml={8} />
            <Tool $w={16} $ml={10}><Sort /></Tool>
            <VSep $ml={8} />
            <Tool $w={16} $ml={8}><ShowMarks /></Tool>
          </Row>
          <Row>
            <Tool $w={26} $ml={4} $on><Lines kind="left" /></Tool>
            <Tool $w={16} $ml={5}><Lines kind="center" /></Tool>
            <Tool $w={14} $ml={11}><Lines kind="right" /></Tool>
            <Tool $w={16} $ml={11}><Lines kind="just" /></Tool>
            <Tool $w={18} $ml={9}><Distribute /></Tool>
            <VSep $ml={8} />
            <Tool $w={17} $ml={8}><LineSpace /></Tool>
            <CaretCell ml={5} />
            <VSep $ml={8} />
            <Tool $w={20} $ml={7}><Bucket /></Tool>
            <CaretCell ml={5} />
            <Tool $w={18} $ml={7}><Borders /></Tool>
            <CaretCell ml={5} />
          </Row>
        </Rows>
      </GroupBody>
      <GroupLabel><LabelText>段落</LabelText><Launcher /></GroupLabel>
    </Group>
    <Group $w={934}>
      <GroupBody>
        <Gallery>
          {gallery.map((g) => (
            <StyleItem key={g.label}>
              <Sample $font={g.font} $size={g.size} $weight={g.weight} $italic={g.italic} $color={g.color}>
                {g.text ?? (g.size > 20 ? (g.size > 35 ? "AaB" : "AaBb") : "AaBbCcD")}
              </Sample>
              <SampleLabel>{g.mark && <ReturnIcon w={6} h={8} ml={0} />}{g.label}</SampleLabel>
            </StyleItem>
          ))}
          <GalleryScroll>
            <ScrollBtn $off $h={26}><svg width="7" height="4" viewBox="0 0 7 4"><path d="M0 4h7L3.500 0z" fill="#bbb" /></svg></ScrollBtn>
            <ScrollBtn $h={24}><Caret /></ScrollBtn>
            <ScrollBtn $h={23}><svg width="7" height="8" viewBox="0 0 7 8"><path d="M0 .5h7" stroke="#666" /><path d="M0 4h7L3.500 8z" fill="#666" /></svg></ScrollBtn>
          </GalleryScroll>
        </Gallery>
      </GroupBody>
      <GroupLabel><LabelText>樣式</LabelText><Launcher /></GroupLabel>
    </Group>
    <Group $w={86}>
      <GroupBody>
        <EditCol>
          <EditItem><Binocular />尋找<Caret /></EditItem>
          <EditItem><Replace />取代</EditItem>
          <EditItem><Pointer />選取<Caret /></EditItem>
        </EditCol>
      </GroupBody>
      <GroupLabel><LabelText $full>編輯</LabelText></GroupLabel>
    </Group>
    <CollapseCell>
      <svg width="10" height="6" viewBox="0 0 10 6" fill="none" stroke="#555" strokeWidth="1.200"><path d="M.5 5.500 5 1l4.500 4.500" /></svg>
    </CollapseCell>
  </RibbonBar>
);

const WordWindow = ({ mini, children }: { mini?: boolean; children?: React.ReactNode }) => (
  <Shell>
    <Header>
      <TitleArt />
      <TitleBar>
        <Qat>
          <AutoSave>自動儲存</AutoSave>
          <TogglePill>關閉</TogglePill>
          <QatSlot $w={36}>
            <svg width="16" height="17" viewBox="0 0 16 17"><path d="M0 0h13l3 3v14H0z" fill="#fff" /><path d="M3 1h9v5H3zM4 11h8v6H4z" fill="#2b579a" /><rect x="8" y="12" width="2" height="4" fill="#fff" /></svg>
          </QatSlot>
          <QatSlot $w={29}>
            <svg width="19" height="17" viewBox="0 0 19 17" fill="none" stroke="#fff" strokeWidth="2.200"><path d="M6 1 1.500 5.500 6 10M2 5.500h9c6 0 7 8 1 10" /></svg>
          </QatSlot>
          <QatSlot $w={16}><Caret c="#fff" /></QatSlot>
          <QatSlot $w={41}>
            <svg width="17" height="18" viewBox="0 0 17 18" fill="none" stroke="#fff" strokeWidth="2.200"><path d="M6 3C0 6 1 16 8.500 16S17 6 11 3M11 1v6h-.5" /></svg>
          </QatSlot>
          <QatSlot $w={10}>
            <svg width="7" height="8" viewBox="0 0 7 8"><path d="M0 .5h7" stroke="#fff" /><path d="M0 4h7L3.500 8z" fill="#fff" /></svg>
          </QatSlot>
        </Qat>
        <DocTitle>04052474_陳昱叡_HW5.docx</DocTitle>
        <WinArea>
          <UserName>昱叡 陳</UserName>
          <WinBtn $w={59}>
            <svg width="15" height="12" viewBox="0 0 15 12" fill="none" stroke="#8fa8cc"><path d="M.5.5h14v11H.5zM.5 2.500h14M7.500 10V5M5 7l2.500-2.500L10 7" /></svg>
          </WinBtn>
          <WinBtn $w={57}><svg width="12" height="1" viewBox="0 0 12 1"><path d="M0 .5h12" stroke="#8fa8cc" /></svg></WinBtn>
          <WinBtn $w={56}>
            <svg width="12" height="12" viewBox="0 0 12 12" fill="none" stroke="#8fa8cc"><path d="M.5 2.500h9v9h-9zM2.500 2.500v-2h9v9h-2" /></svg>
          </WinBtn>
          <WinBtn $w={36}>
            <svg width="12" height="12" viewBox="0 0 12 12" fill="none" stroke="#8fa8cc"><path d="m.5.5 11 11m0-11-11 11" /></svg>
          </WinBtn>
        </WinArea>
      </TitleBar>
      <TabBar>
        <FileTab>檔案</FileTab>
        <Tab $active>常用</Tab>
        {tabs.map((t) => <Tab key={t}>{t}</Tab>)}
        <TellMe>
          <svg width="14" height="20" viewBox="0 0 14 20" fill="none" stroke="#fff" strokeWidth="1.200"><path d="M4 14c0-3-3-4-3-8a6 6 0 0 1 12 0c0 4-3 5-3 8zM4.500 16.500h5M5.500 19h3" /></svg>
          告訴我您想做什麼
        </TellMe>
        <ShareArea>
          <svg width="17" height="18" viewBox="0 0 17 18" fill="none" stroke="#fff"><path d="M.5 5v12.500h15V13M5 11c0-4 3-6 7-6V1l4.500 5.500L12 11V8c-3 0-5 1-7 3z" /></svg>
          <ShareText>共用</ShareText>
          <svg width="18" height="17" viewBox="0 0 18 17" fill="none" stroke="#fff"><path d="M.5.5h17v12H9l-4 4v-4H.5z" /></svg>
        </ShareArea>
      </TabBar>
    </Header>
    <Ribbon fontName={mini ? "Calibri (本文)" : "新細明體 (本文"} />
    <DocArea>{children}</DocArea>
    <StatusBar>
      <StatusText $w={129}>第 2 頁，共 2 頁</StatusText>
      <StatusText $w={81}>440 個字</StatusText>
      <StatusText $w={37}>
        <svg width="17" height="16" viewBox="0 0 17 16" fill="none" stroke="#666"><path d="M.5 1.500h7l1 1 1-1h7v12h-7l-1 1-1-1h-7zM8.500 2.500v12M11 5l4 4m0-4-4 4" /></svg>
      </StatusText>
      <span>{mini ? "英文 (美國)" : "中文 (台灣)"}</span>
      <StatusRight>
        <ViewBtn $w={44}>
          <svg width="17" height="15" viewBox="0 0 17 15" fill="none" stroke="#666"><path d="M.5.5h7l1 1 1-1h7v12h-7l-1 1-1-1h-7zM8.500 1.500v12M2 4h5M2 7h5M2 10h5M10 4h5M10 7h5M10 10h5" /></svg>
        </ViewBtn>
        <ViewBtn $w={42} $on>
          <svg width="17" height="15" viewBox="0 0 17 15" fill="none" stroke="#666"><path d="M.5.5h16v14H.5zM3 3.500h11M3 6h11M3 8.500h11M3 11h11" /></svg>
        </ViewBtn>
        <ViewBtn $w={42}>
          <svg width="18" height="15" viewBox="0 0 18 15" fill="none"><path d="M.5.5h13v13H.5zM3 3.500h8M3 6h8M3 8.500h5" stroke="#666" /><circle cx="13.500" cy="10.500" r="4.500" fill="#777" /></svg>
        </ViewBtn>
        <ZoomOut><svg width="10" height="2" viewBox="0 0 10 2"><rect width="10" height="2" fill="#666" /></svg></ZoomOut>
        <ZoomTrack />
        <ViewBtn $w={11}><svg width="10" height="10" viewBox="0 0 10 10"><path d="M0 4h10v2H0zM4 0h2v10H4z" fill="#666" /></svg></ViewBtn>
        <ZoomPct>100%</ZoomPct>
      </StatusRight>
    </StatusBar>
    <Taskbar>
      {tasks.map((t) => (
        <TaskSlot key={t.key} $w={t.w} $run={t.run} $active={t.active}>{t.icon}</TaskSlot>
      ))}
      <Tray>
        <TrayIcon $w={28}><Chevron /></TrayIcon>
        <TrayIcon $w={30}><Battery /></TrayIcon>
        <TrayIcon $w={30}><Network /></TrayIcon>
        <TrayIcon $w={30}><Speaker /></TrayIcon>
        <TrayIcon $w={29}><XCircle /></TrayIcon>
        <Clock>下午 08:39<br />2019/4/3</Clock>
        <NotifyBox>
          <svg width="20" height="19" viewBox="0 0 20 19"><path d="M0 0h20v15H8l-3 4v-4H0z" fill="#fff" /><path d="M3 4h14M3 7.500h14M3 11h10" stroke="#555" /></svg>
          <NotifyBadge>6</NotifyBadge>
        </NotifyBox>
      </Tray>
    </Taskbar>
    {mini && (
      <ConsoleWin>
        <ConsoleTitle>
          <svg width="14" height="2" viewBox="0 0 14 2"><path d="M0 1h14" stroke="#999" /></svg>
          <svg width="14" height="14" viewBox="0 0 14 14" fill="none" stroke="#999"><rect x=".5" y=".5" width="13" height="13" /></svg>
          <svg width="14" height="14" viewBox="0 0 14 14" fill="none" stroke="#999"><path d="m0 0 14 14m0-14L0 14" /></svg>
        </ConsoleTitle>
        <ConsoleBody>
          <ConsoleScreen />
          <ConsoleScroll>
            <svg width="12" height="7" viewBox="0 0 12 7" fill="none" stroke="#555" strokeWidth="2"><path d="M1 6 6 1l5 5" /></svg>
            <ConsoleThumb />
            <ConsoleDown><svg width="12" height="7" viewBox="0 0 12 7" fill="none" stroke="#555" strokeWidth="2"><path d="m1 1 5 5 5-5" /></svg></ConsoleDown>
          </ConsoleScroll>
        </ConsoleBody>
      </ConsoleWin>
    )}
  </Shell>
);

export default function App() {
  return (
    <>
      <Global />
      <WordWindow>
        <Page>
          <PinkRow><PinkBox /><ReturnIcon ml={5} drop={6} /></PinkRow>
          <MiniRow>
            <MiniFrame>
              <MiniScale><WordWindow mini /></MiniScale>
            </MiniFrame>
            <ReturnIcon ml={1} />
          </MiniRow>
          <Paras>
            <EmptyPara><ReturnIcon ml={0} /></EmptyPara>
            <EmptyPara><ReturnIcon ml={0} /></EmptyPara>
          </Paras>
        </Page>
        <Dialog>
          <DialogTitle>
            <JavaTile size={20} />
            <DialogName>hw5_3 ID_UI</DialogName>
            <DialogControls>
              <CtrlBtn><svg width="12" height="2" viewBox="0 0 12 2"><path d="M0 1h12" stroke="#000" /></svg></CtrlBtn>
              <CtrlBtn><svg width="12" height="12" viewBox="0 0 12 12" fill="none" stroke="#000"><rect x=".5" y=".5" width="11" height="11" /></svg></CtrlBtn>
              <CtrlBtn><svg width="13" height="13" viewBox="0 0 13 13" fill="none" stroke="#000"><path d="m.5.5 12 12m0-12-12 12" /></svg></CtrlBtn>
            </DialogControls>
          </DialogTitle>
          <DialogBody>
            <Prompt>請選擇性別<PromptDots>...</PromptDots></Prompt>
            <FieldRow $h={28}>
              <FieldLabel>地區</FieldLabel>
              <SelectBox>
                <SelectValue>基隆市</SelectValue>
                <SelectArrow><svg width="9" height="5" viewBox="0 0 9 5" fill="none" stroke="#555"><path d="m.5.5 4 4 4-4" /></svg></SelectArrow>
              </SelectBox>
            </FieldRow>
            <FieldRow $h={25}>
              <FieldLabel>性別</FieldLabel>
              <RadioRow>
                <Radio />男
                <Radio $gap={11} />女
              </RadioRow>
            </FieldRow>
            <CreateBtn>產生</CreateBtn>
          </DialogBody>
        </Dialog>
      </WordWindow>
    </>
  );
}
